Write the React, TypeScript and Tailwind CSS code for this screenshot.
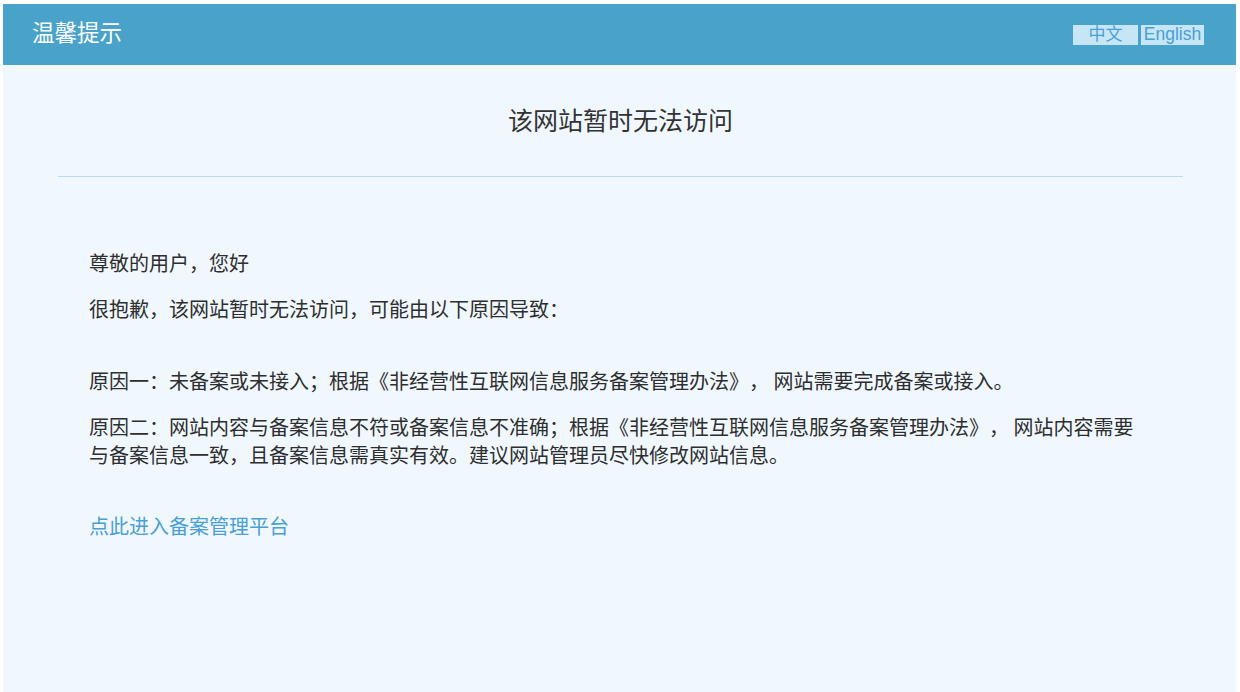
const font = { fontFamily: '"Liberation Sans", "Noto Sans CJK SC", sans-serif' }

/** Notice page shown when a site is unreachable because of filing (备案) issues */
export default function App() {
  return (
    <div className="min-h-screen bg-white pt-[4px] pl-[3px] pr-[4px] [text-spacing-trim:space-all]" style={font}>
      <div className="min-h-[688px] bg-[#f0f8fe]">
        <header className="flex h-[61px] items-center justify-between bg-[#48a2c9] pl-[29px] pr-[32px]">
          <h2 className="text-[22.5px] font-normal leading-none text-white">温馨提示</h2>
          <div className="flex gap-[3px]">
            <span className="flex h-[20px] w-[65px] items-center justify-center bg-[#c6e6f5] text-[17px] leading-none text-[#4a9fd3]">中文</span>
            <span className="flex h-[20px] w-[63px] items-center justify-center bg-[#c6e6f5] text-[17.5px] leading-none text-[#4a9fd3]">English</span>
          </div>
        </header>

        <main className="pl-[55px] pr-[53px]">
          <h1 className="pt-[38px] text-center text-[25px] font-normal leading-[36px] text-[#333]">该网站暂时无法访问</h1>
          <div className="mt-[37px] h-[1px] bg-[#b9dcf1]" />

          <div className="pl-[31px] pr-[40px] pt-[72px] font-['Noto_Sans_CJK_SC',sans-serif] text-[20px] leading-[28px] text-[#2e2e2e]">
            <p className="mb-[18px]">尊敬的用户，您好</p>
            <p className="mb-[44px]">很抱歉，该网站暂时无法访问，可能由以下原因导致：</p>
            <p className="mb-[18px]">原因一：未备案或未接入；根据《非经营性互联网信息服务备案管理办法》， 网站需要完成备案或接入。</p>
            <p className="mb-[43px]">原因二：网站内容与备案信息不符或备案信息不准确；根据《非经营性互联网信息服务备案管理办法》， 网站内容需要与备案信息一致，且备案信息需真实有效。建议网站管理员尽快修改网站信息。</p>
            <a href="#" className="text-[#4a9fd3]">点此进入备案管理平台</a>
          </div>
        </main>
      </div>
    </div>
  )
}
